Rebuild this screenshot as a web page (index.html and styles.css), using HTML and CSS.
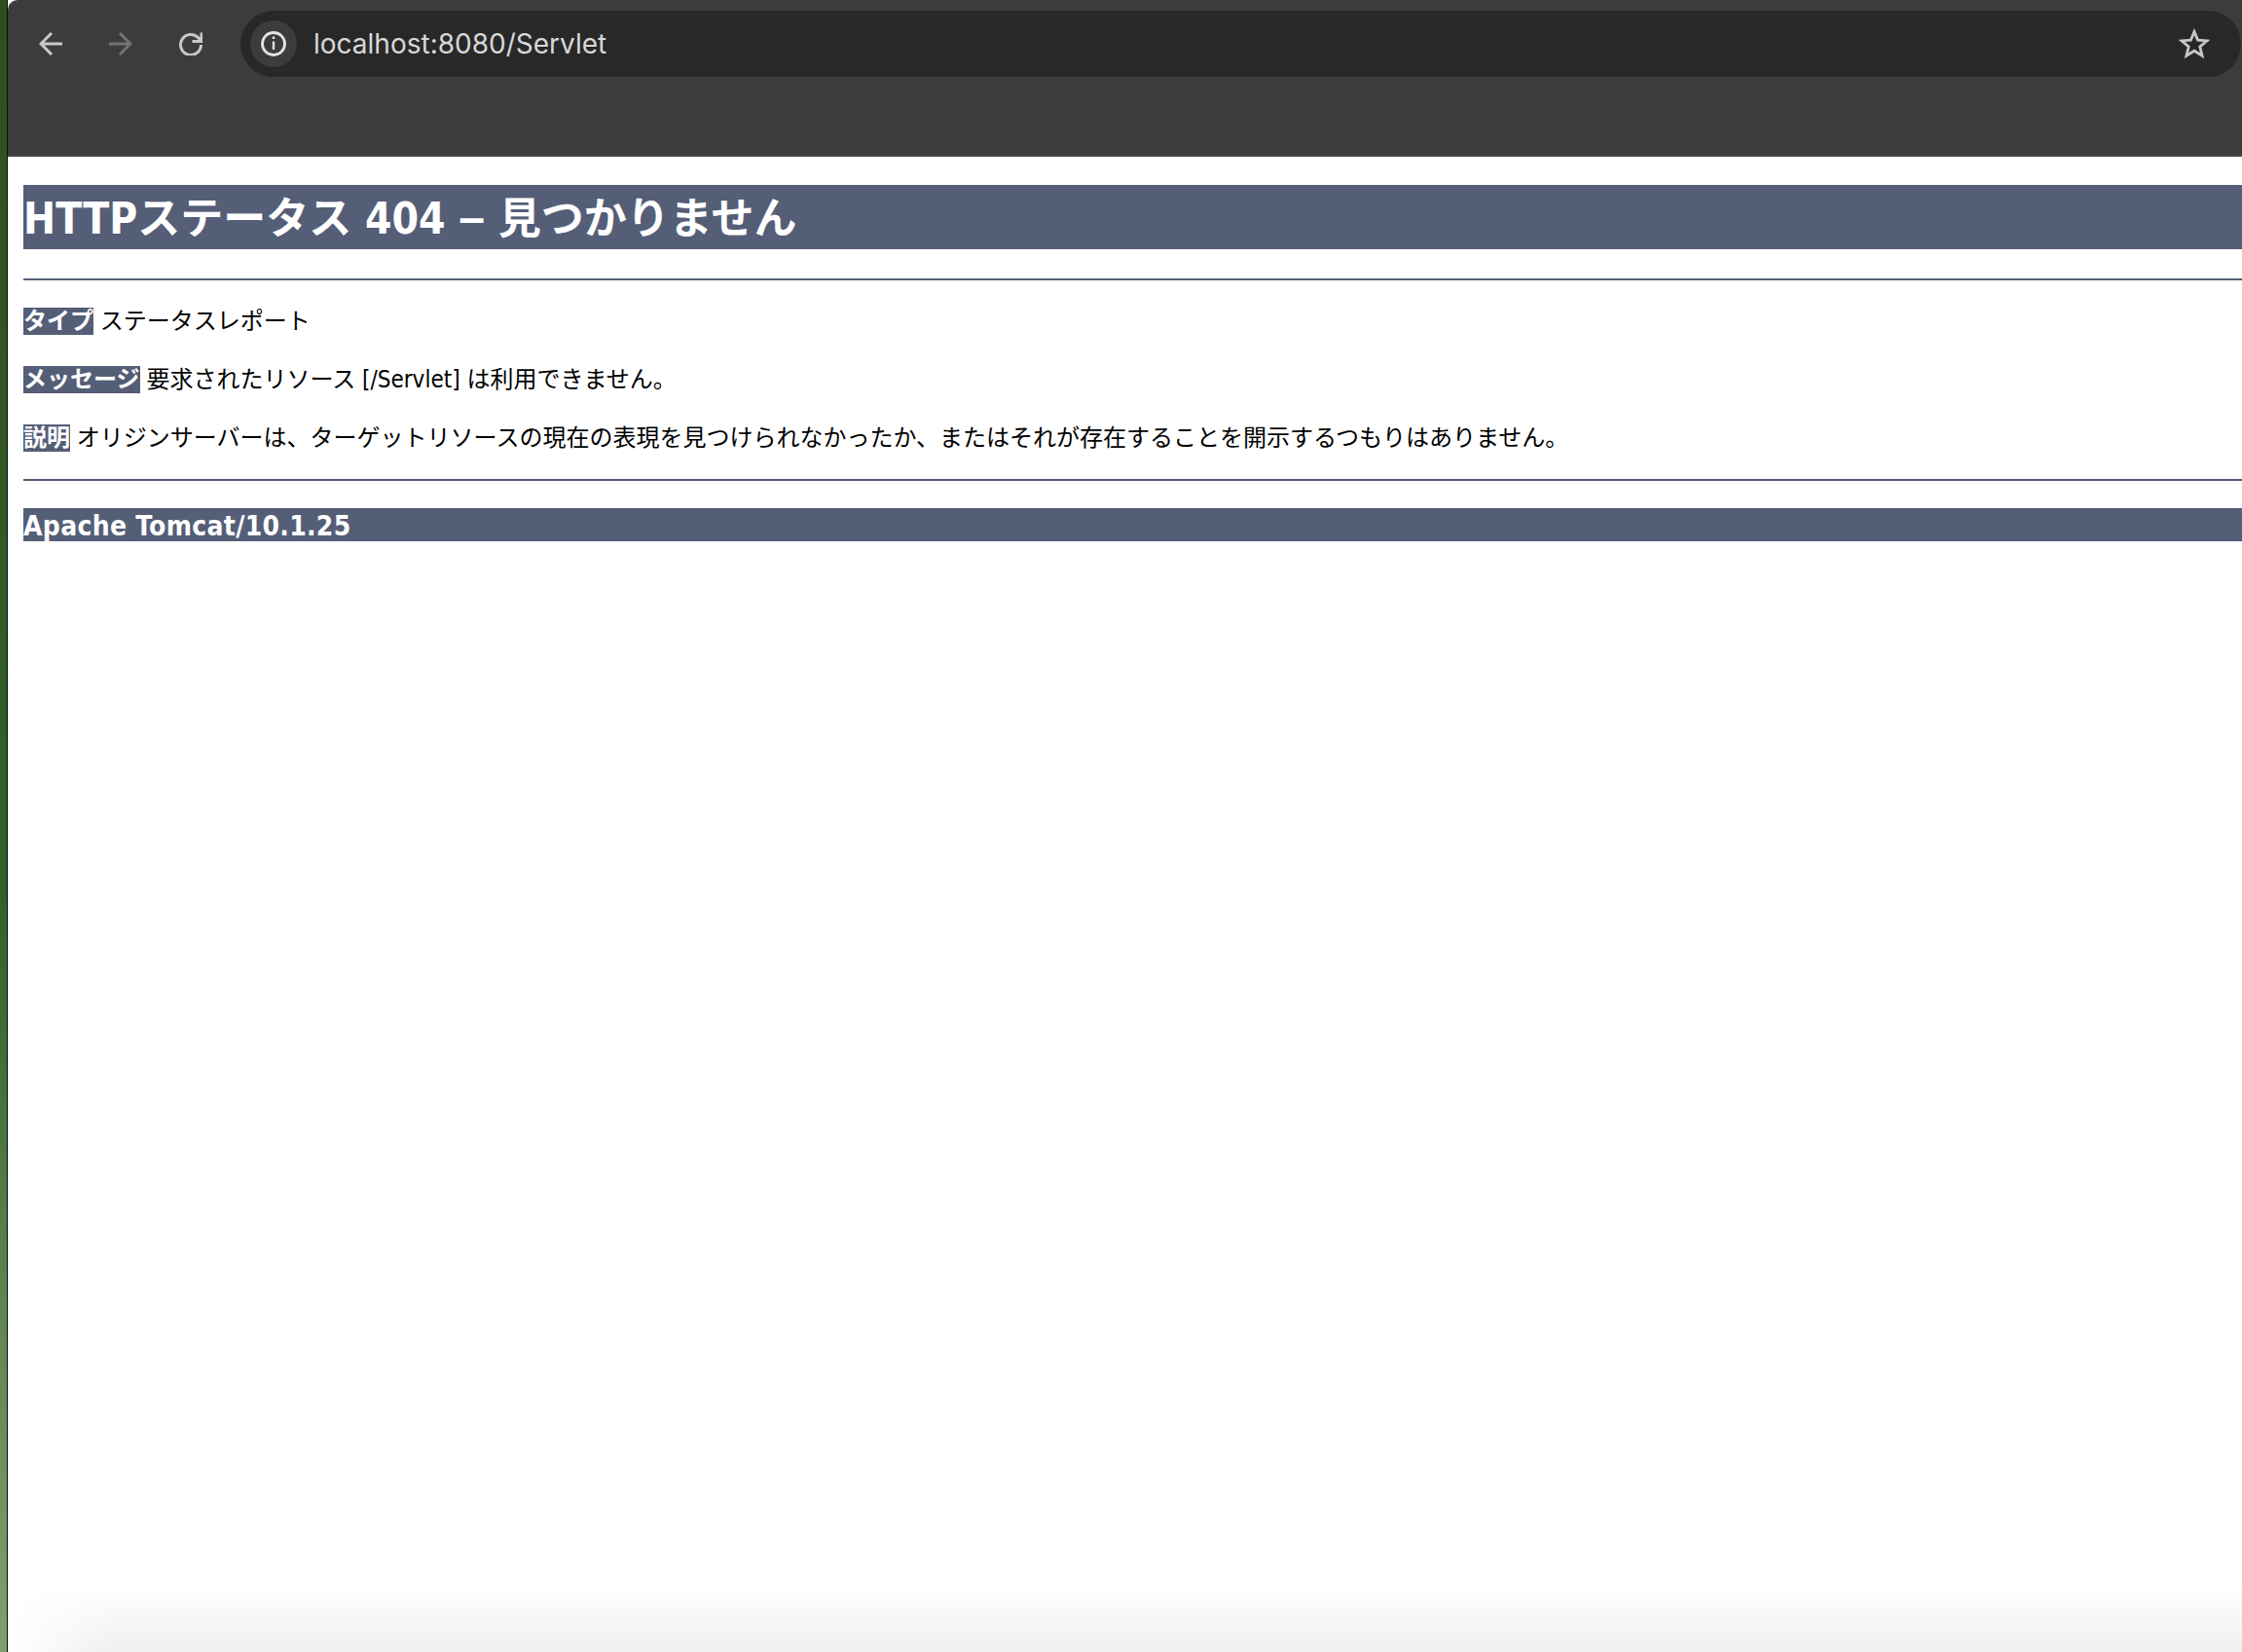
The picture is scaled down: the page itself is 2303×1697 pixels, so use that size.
FILE: index.html
```html
<!DOCTYPE html>
<html lang="ja">
<head>
<title>HTTPステータス 404 – 見つかりません</title>
<link rel="stylesheet" href="styles.css">
</head>
<body>

<div class="desktop-edge"></div>

<div class="window">
    <div class="toolbar">
        <div class="nav-buttons">
            <svg class="nav-icon" viewBox="0 0 24 24"><path d="M24 12H2M13 1 2 12 13 23"/></svg>
            <svg class="nav-icon disabled" viewBox="0 0 24 24"><path d="M0 12H22M11 1 22 12 11 23"/></svg>
            <svg class="nav-icon" viewBox="0 0 24 24"><path d="M22.5 13a10.5 10.5 0 1 1-3-7.4L23 9M23 .5V9.5H13.5"/></svg>
        </div>
        <div class="omnibox">
            <div class="site-info">
                <svg viewBox="0 0 28 28"><circle cx="14" cy="14" r="11.5"/><path class="info-i" d="M14 11.5V20M14 6.5V9"/></svg>
            </div>
            <span class="url">localhost:8080/Servlet</span>
            <svg class="star" viewBox="0 0 32 32"><path d="M16 3.5 19.6 12.2 29 12.9 21.8 19 24.1 28.2 16 23.2 7.9 28.2 10.2 19 3 12.9 12.4 12.2Z"/></svg>
        </div>
    </div>

    <div class="page">
        <h1>HTTPステータス 404 <span class="dash">–</span> 見つかりません</h1>
        <hr>
        <p><b>タイプ</b> ステータスレポート</p>
        <p><b>メッセージ</b> 要求されたリソース [/Servlet] は利用できません。</p>
        <p><b>説明</b> オリジンサーバーは、ターゲットリソースの現在の表現を見つけられなかったか、またはそれが存在することを開示するつもりはありません。</p>
        <hr>
        <h3>Apache Tomcat/10.1.25</h3>
    </div>
</div>

<div class="bottom-shade"></div>

</body>
</html>
```

FILE: styles.css
```css
html, body {
    height: 100%;
}

body {
    margin: 0;
    display: flex;
    overflow: hidden;
    background: white;
    font-family: "DejaVu Sans Condensed", "Noto Sans CJK JP", sans-serif;
}

.desktop-edge {
    width: 7px;
    flex-shrink: 0;
    background: linear-gradient(#2c4f20, #34602a 55%, #5c8450 78%, #7f9f70);
    border-right: 1px solid #0c0c0c;
}

.window {
    flex: 1;
    min-width: 0;
}

.toolbar {
    height: 161px;
    box-sizing: border-box;
    padding: 11px 1px 0 0;
    display: flex;
    align-items: flex-start;
    background: #3c3c3c;
    border-bottom: 2px solid #484848;
    border-top-left-radius: 10px;
}

.nav-buttons {
    display: flex;
    align-items: center;
    gap: 48px;
    height: 68px;
    padding: 0 0 0 32px;
}

.nav-icon {
    width: 24px;
    height: 24px;
    fill: none;
    stroke: #c7c7c7;
    stroke-width: 3;
}

.nav-icon.disabled {
    stroke: #737373;
}

.omnibox {
    flex: 1;
    height: 68px;
    margin-left: 39px;
    padding: 0 32px 0 10px;
    display: flex;
    align-items: center;
    background: #282828;
    border-radius: 34px;
}

.site-info {
    width: 48px;
    height: 48px;
    display: flex;
    align-items: center;
    justify-content: center;
    background: #3c3c3c;
    border-radius: 50%;
}

.site-info svg {
    width: 28px;
    height: 28px;
    fill: none;
    stroke: #e3e3e3;
    stroke-width: 2.8;
}

.site-info .info-i {
    stroke-width: 2.4;
}

.url {
    flex: 1;
    margin-left: 17px;
    color: #d8d8d8;
    font-family: Inter, Roboto, sans-serif;
    font-size: 28px;
}

.star {
    width: 32px;
    height: 32px;
    fill: none;
    stroke: #c7c7c7;
    stroke-width: 2.8;
}

.page {
    padding: 29px 0 0 16px;
    color: black;
    font-size: 24px;
}

h1, h3, b {
    color: white;
    background: #555e77;
}

h1 {
    margin: 0 0 30px;
    height: 66px;
    box-sizing: border-box;
    padding-top: 4px;
    font-size: 44px;
    line-height: 62px;
}

.dash {
    font-family: "Liberation Sans", sans-serif;
    font-size: 48px;
    line-height: 0;
}

h3 {
    margin: 0;
    height: 34px;
    font-size: 28px;
    line-height: 37px;
    letter-spacing: 0.3px;
}

hr {
    height: 2px;
    margin: 0 0 28px;
    border: none;
    background: #555e77;
}

p {
    margin: 0 0 31px;
    height: 29px;
    line-height: 29px;
}

p:last-of-type {
    margin-bottom: 27px;
}

.bottom-shade {
    position: fixed;
    left: 8px;
    right: 0;
    bottom: 0;
    height: 70px;
    background: linear-gradient(rgba(238,238,238,0), #efefef);
    -webkit-mask-image: linear-gradient(to right, transparent, black 110px);
    mask-image: linear-gradient(to right, transparent, black 110px);
    pointer-events: none;
}
```
